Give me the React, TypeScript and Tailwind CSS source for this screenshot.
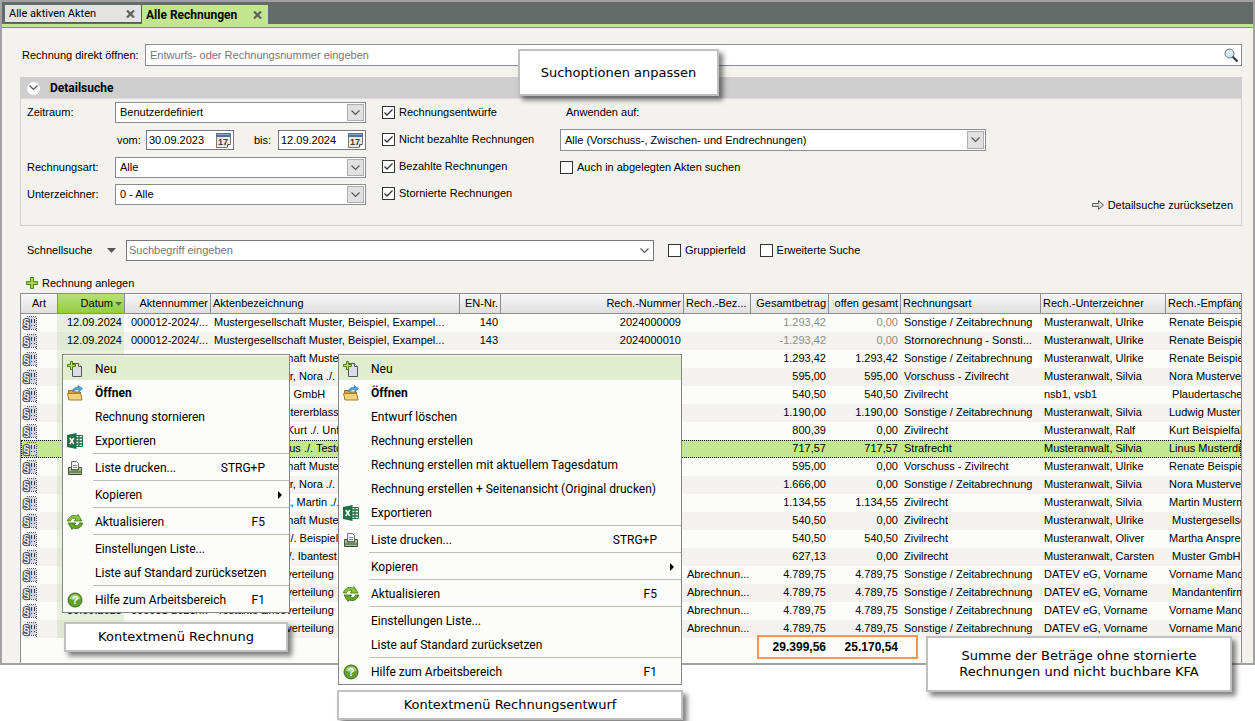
import type { ReactNode } from 'react'
import clsx from 'clsx'

type Row = {
  date: string
  file: string
  title: string
  en?: string
  no?: string
  desc?: string
  total: string
  open: string
  kind: string
  signer: string
  to: string
  cancelled?: boolean
  selected?: boolean
}

type MenuEntry = {
  label: string
  icon?: ReactNode
  keys?: string
  bold?: boolean
  active?: boolean
  sub?: boolean
  line?: boolean
}

const company = 'Mustergesellschaft Muster, Beispiel, Exampel...'
const billing = 'Sonstige / Zeitabrechnung'

const rows: Row[] = [
  { date: '12.09.2024', file: '000012-2024/...', title: company, en: '140', no: '2024000009', total: '1.293,42', open: '0,00', kind: billing, signer: 'Musteranwalt, Ulrike', to: 'Renate Beispiel', cancelled: true },
  { date: '12.09.2024', file: '000012-2024/...', title: company, en: '143', no: '2024000010', total: '-1.293,42', open: '0,00', kind: 'Stornorechnung - Sonsti...', signer: 'Musteranwalt, Ulrike', to: 'Renate Beispiel', cancelled: true },
  { date: '12.09.2024', file: '000012-2024/...', title: company, en: '144', total: '1.293,42', open: '1.293,42', kind: billing, signer: 'Musteranwalt, Ulrike', to: 'Renate Beispiel' },
  { date: '12.09.2024', file: '000011-2024/...', title: 'Mustervermieter, Nora ./. Mieter', total: '595,00', open: '595,00', kind: 'Vorschuss - Zivilrecht', signer: 'Musteranwalt, Silvia', to: 'Nora Mustervermieter' },
  { date: '11.09.2024', file: '000010-2024', title: 'Plaudertaschen GmbH', total: '540,50', open: '540,50', kind: 'Zivilrecht', signer: 'nsb1, vsb1', to: '\u00a0Plaudertaschen GmbH' },
  { date: '11.09.2024', file: '000009-2024', title: 'Erbsachen Mustererblasser', total: '1.190,00', open: '1.190,00', kind: billing, signer: 'Musteranwalt, Silvia', to: 'Ludwig Mustererblasser' },
  { date: '10.09.2024', file: '000008-2024', title: 'Beispielfahrer, Kurt ./. Unfallgegner', total: '800,39', open: '0,00', kind: 'Zivilrecht', signer: 'Musteranwalt, Ralf', to: 'Kurt Beispielfahrer' },
  { date: '10.09.2024', file: '000007-2024', title: 'Musterdieb, Linus ./. Testopfer', total: '717,57', open: '717,57', kind: 'Strafrecht', signer: 'Musteranwalt, Silvia', to: 'Linus Musterdieb', selected: true },
  { date: '09.09.2024', file: '000012-2024/...', title: company, total: '595,00', open: '0,00', kind: 'Vorschuss - Zivilrecht', signer: 'Musteranwalt, Ulrike', to: 'Renate Beispiel' },
  { date: '09.09.2024', file: '000011-2024/...', title: 'Mustervermieter, Nora ./. Mieter', total: '1.666,00', open: '0,00', kind: billing, signer: 'Musteranwalt, Silvia', to: 'Nora Mustervermieter' },
  { date: '06.09.2024', file: '000006-2024', title: 'Mustermandant, Martin ./. Muster', total: '1.134,55', open: '1.134,55', kind: 'Zivilrecht', signer: 'Musteranwalt, Silvia', to: 'Martin Mustermandant' },
  { date: '06.09.2024', file: '000005-2024', title: company, total: '540,50', open: '0,00', kind: 'Zivilrecht', signer: 'Musteranwalt, Ulrike', to: '\u00a0Mustergesellschaft' },
  { date: '05.09.2024', file: '000004-2024', title: 'Ansprech, Mia ./. Beispiel', total: '540,50', open: '540,50', kind: 'Zivilrecht', signer: 'Musteranwalt, Oliver', to: 'Martha Ansprechpartner' },
  { date: '05.09.2024', file: '000003-2024', title: 'Muster GmbH ./. Ibantest', total: '627,13', open: '0,00', kind: 'Zivilrecht', signer: 'Musteranwalt, Carsten', to: '\u00a0Muster GmbH' },
  { date: '30.09.2023', file: '000031-2023/...', title: '\u00a0Testakte Erlösverteilung', desc: 'Abrechnun...', total: '4.789,75', open: '4.789,75', kind: billing, signer: 'DATEV eG, Vorname', to: 'Vorname Mandant' },
  { date: '30.09.2023', file: '000031-2023/...', title: '\u00a0Testakte Erlösverteilung', desc: 'Abrechnun...', total: '4.789,75', open: '4.789,75', kind: billing, signer: 'DATEV eG, Vorname', to: '\u00a0Mandantenfirma' },
  { date: '30.09.2023', file: '000031-2023/...', title: '\u00a0Testakte Erlösverteilung', desc: 'Abrechnun...', total: '4.789,75', open: '4.789,75', kind: billing, signer: 'DATEV eG, Vorname', to: 'Vorname Mandant' },
  { date: '30.09.2023', file: '000031-2023/...', title: '\u00a0Testakte Erlösverteilung', desc: 'Abrechnun...', total: '4.789,75', open: '4.789,75', kind: billing, signer: 'DATEV eG, Vorname', to: 'Vorname Mandant' },
]

function NewIcon() {
  return (
    <svg viewBox="0 0 16 16" className="size-4">
      <path d="M5.500 2.500h6l3 3v10h-9z" fill="#dcdce8" stroke="#55555c" />
      <path d="M11.500 2.500v3h3" fill="#fff" stroke="#55555c" />
      <path d="M3.500.5h2v3h3v2h-3v3h-2v-3h-3v-2h3z" fill="#c5e06a" stroke="#4b7d10" />
    </svg>
  )
}

function OpenIcon() {
  return (
    <svg viewBox="0 0 16 16" className="size-4">
      <path d="M1.500 14V5.500h4l1 1.500h7v7z" fill="#d9a441" stroke="#94702a" />
      <path d="M.5 8.500h13l1.500 6.500H2z" fill="#f3d37e" stroke="#a37c2c" />
      <path d="M5.500 6c.5-3 3-4 5.500-3.500V.5l4.500 3L12 7V5c-2-.5-3.500-.5-4.500 1z" fill="#4ba3d6" stroke="#2b7aad" strokeWidth=".6" />
    </svg>
  )
}

function ExcelIcon() {
  return (
    <svg viewBox="0 0 16 16" className="size-4">
      <path d="M8 2.500h7.500v11H8z" fill="#fff" stroke="#1e7145" />
      <path d="M9 5h6M9 8h6M9 11h6M12 3v10" stroke="#1e7145" strokeWidth="1.300" />
      <path d="M0 2l9.500-2v16L0 14z" fill="#1e7145" />
      <path d="M2.800 5l4 6M6.800 5l-4 6" stroke="#fff" strokeWidth="1.500" />
    </svg>
  )
}

function PrintIcon() {
  return (
    <svg viewBox="0 0 16 16" className="size-4">
      <path d="M4.500 1.500h5l2 2v6h-7z" fill="#f6f6fa" stroke="#6d6d78" />
      <path d="M6 5.500h4M6 7.500h4" stroke="#6fa632" />
      <path d="M1.500 7.500h3V10h7V7.500h3v7h-13z" fill="#a9bf95" stroke="#4a5844" />
      <path d="M2 12h12" stroke="#5d7052" strokeWidth="1.500" />
      <path d="M2 14.500h12" stroke="#39442f" />
    </svg>
  )
}

function RefreshIcon() {
  return (
    <svg viewBox="0 0 16 16" className="size-4">
      <path d="M.5 7C1 3 5.500.2 9.500 2L11 .5l4 6.500H7.500L9 4.800C6.500 3.500 4 4.500 3.500 7z" fill="#8cc63f" stroke="#3b7414" strokeWidth=".8" />
      <path d="M15.500 9c-.5 4-5 6.800-9 5L5 15.500 1 9h7.500L7 11.200c2.500 1.300 5 .3 5.500-2.200z" fill="#69a92b" stroke="#336510" strokeWidth=".8" />
    </svg>
  )
}

function HelpIcon() {
  return (
    <svg viewBox="0 0 16 16" className="size-4">
      <circle cx="8" cy="8" r="7" fill="#62a02d" stroke="#3c6f18" />
      <path d="M2.500 6.500a5.800 5.800 0 0111 0C10 8.500 6 8.500 2.500 6.500z" fill="#a2cf70" />
      <text x="8" y="12" textAnchor="middle" fontSize="11" fontWeight="700" fill="#fff" fontFamily="Liberation Sans, sans-serif">?</text>
    </svg>
  )
}

function InvoiceIcon() {
  return (
    <svg viewBox="0 0 15 15" className="h-[15px] w-[15px]">
      <path d="M6 1h8v12H6z" fill="#d2d2e2" />
      <path d="M5 .5h10M14.500 2v13M7 13.500h7" stroke="#4c4c60" strokeDasharray="1 1" fill="none" />
      <path d="M9.500 3v4M12.500 3v4M9 9.500h1M12 9.500h1" stroke="#3c3c58" />
      <text x="1" y="12" fontSize="12" fontWeight="700" fill="#ededf5" stroke="#48485c" strokeWidth="2" paintOrder="stroke" fontFamily="Liberation Sans, sans-serif">§</text>
    </svg>
  )
}

function CalendarIcon() {
  return (
    <svg viewBox="0 0 15 15" className="h-[15px] w-[15px]">
      <path d="M.5.5h14v10l-4 4H.5z" fill="#e9e9e2" stroke="#77776f" />
      <path d="M0 0h15v4H0z" fill="#4f7296" />
      <path d="M1 1h13v1H1z" fill="#86a8c9" />
      <path d="M14.500 11.500h-3v3" fill="#d5d5cc" stroke="#55554f" />
      <text x="7" y="12" textAnchor="middle" fontSize="9" fontWeight="700" fill="#3d3d38" fontFamily="Liberation Sans, sans-serif">17</text>
    </svg>
  )
}

function SearchIcon() {
  return (
    <svg viewBox="0 0 15 15" className="h-[15px] w-[15px]">
      <path d="M8.500 8.500l5 5" stroke="#3a3a3a" strokeWidth="2.200" />
      <circle cx="5.500" cy="5.500" r="4.500" fill="#cfe9f8" stroke="#6b7078" />
      <path d="M3 5.500A2.500 2.500 0 015.500 3" stroke="#fff" strokeWidth="1.500" fill="none" />
    </svg>
  )
}

function Chevron() {
  return (
    <svg viewBox="0 0 9 6" className="h-1.5 w-[9px]" fill="none" stroke="#55555a">
      <path d="M.5.500l4 4 4-4" strokeWidth="1.200" />
    </svg>
  )
}

function CloseIcon() {
  return (
    <svg viewBox="0 0 9 8" className="h-2 w-[9px]" stroke="#5d5f5d" strokeWidth="2.200">
      <path d="M1 .5l7 7M8 .5l-7 7" />
    </svg>
  )
}

const draftMenu: MenuEntry[] = [
  { label: 'Neu', icon: <NewIcon />, active: true },
  { label: 'Öffnen', icon: <OpenIcon />, bold: true },
  { label: 'Entwurf löschen' },
  { label: 'Rechnung erstellen' },
  { label: 'Rechnung erstellen mit aktuellem Tagesdatum' },
  { label: 'Rechnung erstellen + Seitenansicht (Original drucken)' },
  { label: 'Exportieren', icon: <ExcelIcon />, line: true },
  { label: 'Liste drucken...', icon: <PrintIcon />, keys: 'STRG+P', line: true },
  { label: 'Kopieren', sub: true, line: true },
  { label: 'Aktualisieren', icon: <RefreshIcon />, keys: 'F5', line: true },
  { label: 'Einstellungen Liste...' },
  { label: 'Liste auf Standard zurücksetzen', line: true },
  { label: 'Hilfe zum Arbeitsbereich', icon: <HelpIcon />, keys: 'F1' },
]

const invoiceMenu: MenuEntry[] = [
  ...draftMenu.slice(0, 2),
  { label: 'Rechnung stornieren' },
  ...draftMenu.slice(6),
]

function ContextMenu({ entries, label, className }: { entries: MenuEntry[]; label: string; className: string }) {
  return (
    <ul
      role="menu"
      aria-label={label}
      className={clsx('absolute border border-[#868686] bg-[#fcfdfa] py-px font-[Roboto,sans-serif] text-[12px] text-black', className)}
    >
      {entries.map((e) => (
        <li key={e.label} role="none">
          <button
            type="button"
            role="menuitem"
            className={clsx('relative flex h-6 w-full items-center pt-0.5 pr-6 pl-1', e.active && 'bg-[#e0eecf]', e.bold && 'font-bold')}
          >
            <span className="w-7 shrink-0">{e.icon}</span>
            <span className="whitespace-nowrap">{e.label}</span>
            {e.keys && <span className="ml-auto">{e.keys}</span>}
            {e.sub && (
              <svg viewBox="0 0 4 8" className="absolute right-[7px] h-2 w-1">
                <path d="M0 0l4 4-4 4z" />
              </svg>
            )}
          </button>
          {e.line && <hr className="my-px ml-[30px] border-[#bdbdb2]" />}
        </li>
      ))}
    </ul>
  )
}

function Callout({ children, className }: { children: ReactNode; className: string }) {
  return (
    <div
      className={clsx(
        "absolute flex items-center justify-center border-2 border-[#c0c0c0] bg-white text-center font-['DejaVu_Sans',sans-serif] text-[13px] leading-4 text-black shadow-[4px_4px_5px_#00000080]",
        className,
      )}
    >
      {children}
    </div>
  )
}

function Select({ id, value, className }: { id: string; value: string; className?: string }) {
  return (
    <div className={clsx('relative border border-[#8c8c90] bg-white', className)}>
      <select id={id} defaultValue={value} className="block h-full w-full appearance-none pr-6 pl-1 outline-none">
        <option>{value}</option>
      </select>
      <span className="pointer-events-none absolute inset-y-px right-px flex w-[17px] items-center justify-center border border-[#adadad] bg-[#e1e1e1]">
        <Chevron />
      </span>
    </div>
  )
}

function Check({ label, checked }: { label: string; checked?: boolean }) {
  return (
    <label className="flex items-center gap-1 leading-[13px] whitespace-nowrap">
      <span className="grid size-[13px] place-items-center">
        <input type="checkbox" defaultChecked={checked} className="peer col-start-1 row-start-1 size-[13px] appearance-none border border-[#333] bg-white" />
        <svg viewBox="0 0 11 11" className="pointer-events-none invisible col-start-1 row-start-1 size-[11px] peer-checked:visible" fill="none" stroke="#333">
          <path d="M1.500 5.500L4 8l5.500-5.500" strokeWidth="1.300" />
        </svg>
      </span>
      {label}
    </label>
  )
}

function DateField({ id, value }: { id: string; value: string }) {
  return (
    <span className="flex h-5 w-[88px] items-center border border-[#77777c] bg-white px-0.5">
      <input id={id} defaultValue={value} className="w-full min-w-0 outline-none" />
      <button type="button" aria-label="Kalender">
        <CalendarIcon />
      </button>
    </span>
  )
}

const th = 'h-5 overflow-hidden border-b border-l border-[#8c8c8c] px-0.5 font-normal whitespace-nowrap'

export default function App() {
  return (
    <div className="relative min-h-screen overflow-hidden bg-white font-['Liberation_Sans',sans-serif] text-[11px] text-black">
      <div className="border-2 border-[#a1a2a1] bg-[#f3f2ee]">
        <nav className="flex h-[22px] items-end bg-[#656b69] pt-[3px] pl-[3px] font-[Roboto,sans-serif]">
          <div className="mb-px flex h-[18px] w-[137px] items-center justify-between border-r border-b border-[#555a58] bg-[#e3e3e1] pr-1.5 pl-1">
            <button type="button" className="leading-4">Alle aktiven Akten</button>
            <button type="button" aria-label="Tab schließen"><CloseIcon /></button>
          </div>
          <div className="flex h-[19px] w-[126px] items-center justify-between bg-[#c1e68f] pr-1.5 pl-1">
            <button type="button" className="text-[12px] leading-4 font-bold">Alle Rechnungen</button>
            <button type="button" aria-label="Tab schließen"><CloseIcon /></button>
          </div>
        </nav>
        <div className="h-1 border-b border-[#64ac35] bg-[#c1e68f]" />

        <main className="pr-[11px] pl-[18px]">
          <div className="flex items-center pt-4">
            <label htmlFor="direct" className="w-[125px] pl-0.5">Rechnung direkt öffnen:</label>
            <div className="flex h-[22px] flex-1 items-center border border-[#8c8c90] bg-white pr-0.5 pl-1">
              <input id="direct" placeholder="Entwurfs- oder Rechnungsnummer eingeben" className="flex-1 outline-none placeholder:text-[#75757a]" />
              <button type="button" aria-label="Suchen"><SearchIcon /></button>
            </div>
          </div>

          <section className="mt-[11px] border border-[#cfcfcf]">
            <h2 className="flex h-[21px] items-center gap-2.5 border-b border-[#dcdcdc] bg-[#cecece] pl-1.5 font-[Roboto,sans-serif] text-[12px] font-bold">
              <button type="button" aria-label="Detailsuche einklappen" className="grid size-[13px] place-items-center rounded-full bg-white">
                <Chevron />
              </button>
              Detailsuche
            </h2>
            <div className="flex pt-[3px]">
              <div className="flex w-[345px] flex-col gap-1.5 pb-5 pl-1.5">
                <div className="flex items-center">
                  <label htmlFor="period" className="w-[88px]">Zeitraum:</label>
                  <Select id="period" value="Benutzerdefiniert" className="h-[21px] flex-1" />
                </div>
                <div className="flex h-[22px] items-center pl-[90px]">
                  <label htmlFor="from" className="w-[29px]">vom:</label>
                  <DateField id="from" value="30.09.2023" />
                  <label htmlFor="to" className="w-11 pl-5">bis:</label>
                  <DateField id="to" value="12.09.2024" />
                </div>
                <div className="flex items-center">
                  <label htmlFor="kind" className="w-[88px]">Rechnungsart:</label>
                  <Select id="kind" value="Alle" className="h-[21px] flex-1" />
                </div>
                <div className="flex items-center">
                  <label htmlFor="signer" className="w-[88px]">Unterzeichner:</label>
                  <Select id="signer" value="0 - Alle" className="h-[21px] flex-1" />
                </div>
              </div>
              <div className="flex w-[194px] flex-col gap-3.5 pt-1 pl-4">
                <Check label="Rechnungsentwürfe" checked />
                <Check label="Nicht bezahlte Rechnungen" checked />
                <Check label="Bezahlte Rechnungen" checked />
                <Check label="Stornierte Rechnungen" checked />
              </div>
              <div className="w-[426px]">
                <label htmlFor="scope" className="block pt-0.5 pl-1.5 leading-4">Anwenden auf:</label>
                <Select id="scope" value="Alle (Vorschuss-, Zwischen- und Endrechnungen)" className="mt-[9px] mb-2.5 h-[22px]" />
                <Check label="Auch in abgelegten Akten suchen" />
              </div>
              <button type="button" className="mr-2 mb-2.5 ml-auto flex items-center gap-1 self-end leading-5">
                <svg viewBox="0 0 12 10" className="h-2.5 w-3">
                  <path d="M.5 3.500h6v-3l5 4.500-5 4.500v-3h-6z" fill="#d8d8d8" stroke="#5c605e" />
                </svg>
                Detailsuche zurücksetzen
              </button>
            </div>
          </section>

          <div className="mt-3.5 flex h-[21px] items-center pl-[7px]">
            <label htmlFor="quick" className="w-20">Schnellsuche</label>
            <svg viewBox="0 0 9 5" className="mr-2.5 h-[5px] w-[9px]">
              <path d="M0 0h9L4.500 5z" fill="#555" />
            </svg>
            <div className="mr-3.5 flex h-[21px] w-[528px] items-center border border-[#77777c] bg-white pr-1 pl-0.5">
              <input id="quick" placeholder="Suchbegriff eingeben" className="flex-1 outline-none placeholder:text-[#75757a]" />
              <button type="button" aria-label="Letzte Suchbegriffe"><Chevron /></button>
            </div>
            <div className="flex gap-3.5">
              <Check label="Gruppierfeld" />
              <Check label="Erweiterte Suche" />
            </div>
          </div>

          <button type="button" className="mt-3 flex h-5 items-center gap-1 pl-1.5">
            <svg viewBox="0 0 12 12" className="size-3">
              <path d="M4.500.5h3v4h4v3h-4v4h-3v-4h-4v-3h4z" fill="#a4d04a" stroke="#4b8712" />
            </svg>
            Rechnung anlegen
          </button>

          <div className="min-h-[370px] border-t border-r border-l border-[#8c8c8c] bg-[#fcfdfa]">
            <table className="w-full table-fixed border-separate border-spacing-0">
              <colgroup>
                <col className="w-[36px]" />
                <col className="w-[67px]" />
                <col className="w-[86px]" />
                <col className="w-[249px]" />
                <col className="w-[41px]" />
                <col className="w-[183px]" />
                <col className="w-[67px]" />
                <col className="w-[78px]" />
                <col className="w-[72px]" />
                <col className="w-[140px]" />
                <col className="w-[125px]" />
                <col />
              </colgroup>
              <thead>
                <tr className="bg-linear-to-b from-[#f8f8f8] to-[#dedede]">
                  <th className="h-5 border-b border-[#8c8c8c] font-normal">Art</th>
                  <th className={clsx(th, 'bg-linear-to-b from-[#b6e07a] to-[#93cd3c]')}>
                    <button type="button" className="flex w-full items-center justify-end gap-0.5">
                      Datum
                      <svg viewBox="0 0 7 4" className="h-1 w-[7px]">
                        <path d="M0 0h7L3.500 4z" fill="#5c6e48" />
                      </svg>
                    </button>
                  </th>
                  <th className={clsx(th, 'text-right')}>Aktennummer</th>
                  <th className={clsx(th, 'text-left')}>Aktenbezeichnung</th>
                  <th className={clsx(th, 'text-right')}>EN-Nr.</th>
                  <th className={clsx(th, 'text-right')}>Rech.-Nummer</th>
                  <th className={clsx(th, 'text-left')}>Rech.-Bez...</th>
                  <th className={clsx(th, 'text-right')}>Gesamtbetrag</th>
                  <th className={clsx(th, 'text-right')}>offen gesamt</th>
                  <th className={clsx(th, 'text-left')}>Rechnungsart</th>
                  <th className={clsx(th, 'text-left')}>Rech.-Unterzeichner</th>
                  <th className={clsx(th, 'text-left')}>Rech.-Empfänger</th>
                </tr>
              </thead>
              <tbody>
                {rows.map((r, i) => (
                  <tr
                    key={i}
                    className={clsx(
                      '*:h-[18px] *:overflow-hidden *:py-0 *:align-top *:leading-4 *:whitespace-nowrap',
                      r.selected ? 'bg-[#c3e78f] outline-1 -outline-offset-1 outline-black outline-dotted' : i % 2 && 'bg-[#f3f2ee]',
                    )}
                  >
                    <td className="pl-px">
                      <div className="pt-0.5"><InvoiceIcon /></div>
                    </td>
                    <td className={clsx('pr-0.5 text-right', !r.selected && (i % 2 ? 'bg-[#dfe9d3]' : 'bg-[#e6f0dc]'))}>{r.date}</td>
                    <td className="pr-0.5 text-right">{r.file}</td>
                    <td className="pl-1">{r.title}</td>
                    <td className="pr-0.5 text-right">{r.en}</td>
                    <td className="pr-0.5 text-right">{r.no}</td>
                    <td className="pl-1">{r.desc}</td>
                    <td className={clsx('pr-0.5 text-right', r.cancelled && 'text-[#8c8c8c]')}>{r.total}</td>
                    <td className={clsx('pr-0.5 text-right', r.cancelled && 'text-[#8c8c8c]')}>{r.open}</td>
                    <td className="pl-1">{r.kind}</td>
                    <td className="pl-1">{r.signer}</td>
                    <td className="pl-1">{r.to}</td>
                  </tr>
                ))}
              </tbody>
              <tfoot className="text-[12px] font-bold">
                <tr>
                  <td colSpan={7} />
                  <td className="h-[18px] pr-0.5 text-right">29.399,56</td>
                  <td className="pr-0.5 text-right">25.170,54</td>
                  <td colSpan={3} />
                </tr>
              </tfoot>
            </table>
          </div>
        </main>
      </div>

      <div className="absolute top-[635px] left-[757px] h-6 w-[161px] border-2 border-[#fb9650]" />

      <Callout className="top-[49px] left-[518px] h-[47px] w-[201px]">Suchoptionen anpassen</Callout>

      <ContextMenu entries={invoiceMenu} label="Kontextmenü Rechnung" className="top-[354px] left-[62px] w-[228px]" />
      <ContextMenu entries={draftMenu} label="Kontextmenü Rechnungsentwurf" className="top-[354px] left-[338px] w-[344px]" />

      <Callout className="top-[622px] left-[64px] h-[30px] w-[224px]">Kontextmenü Rechnung</Callout>
      <Callout className="top-[690px] left-[337px] h-[30px] w-[346px]">Kontextmenü Rechnungsentwurf</Callout>
      <Callout className="top-[636px] left-[926px] h-14 w-[306px]">
        Summe der Beträge ohne stornierte
        <br />
        Rechnungen und nicht buchbare KFA
      </Callout>
    </div>
  )
}
